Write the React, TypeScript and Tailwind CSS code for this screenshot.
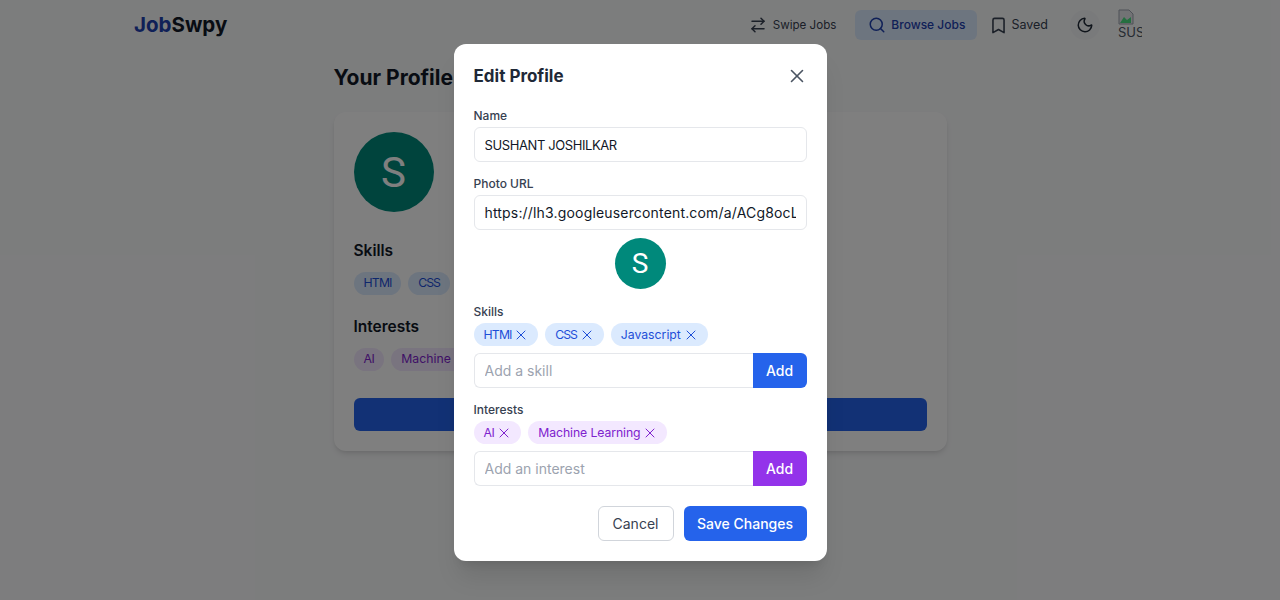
import { ArrowRightLeft, Bookmark, Moon, Search, X } from "lucide-react";

const font = { fontFamily: "Inter, 'Noto Sans', sans-serif" };

function Chip({ label, kind, tracking = "" }: { label: string; kind: "skill" | "interest"; tracking?: string }) {
  return (
    <span
      className={
        kind === "skill"
          ? "flex h-[23px] items-center gap-0.5 rounded-full bg-[#dbeafe] pl-2.5 pr-[9px] text-[12.25px] text-[#1d4ed8]"
          : "flex h-[23px] items-center gap-0.5 rounded-full bg-[#f3e8ff] pl-2.5 pr-[9px] text-[12.25px] text-[#7e22ce]"
      }
    >
      <span className={`pt-px ${tracking}`}>{label}</span>
      <X className="h-4 w-4" strokeWidth={1.5} />
    </span>
  );
}

function Field({ label, value, text }: { label: string; value: string; text: string }) {
  return (
    <div className="mb-[13px]">
      <div className="mb-0.5 text-xs font-medium leading-[18px] text-[#374151]">{label}</div>
      <input
        readOnly
        value={value}
        className={`block h-[35px] w-full rounded-md border border-[#e5e7eb] px-2.5 text-[#111827] ${text}`}
      />
    </div>
  );
}

function AddRow({ placeholder, color }: { placeholder: string; color: string }) {
  return (
    <div className="flex h-[35px]">
      <input
        readOnly
        placeholder={placeholder}
        className="min-w-0 flex-1 rounded-l-md border border-r-0 border-[#e5e7eb] px-2.5 text-sm placeholder:text-[#9ca3af]"
      />
      <button className={`w-[54px] rounded-r-md text-sm font-medium text-white ${color}`}>Add</button>
    </div>
  );
}

function BgChip({ label, kind, tracking = "" }: { label: string; kind: "skill" | "interest"; tracking?: string }) {
  return (
    <span
      className={
        kind === "skill"
          ? `flex h-[23px] items-center rounded-full bg-[#dbeafe] px-2.5 text-[12.25px] text-[#1d4ed8] ${tracking}`
          : `flex h-[23px] items-center whitespace-nowrap rounded-full bg-[#f3e8ff] px-2.5 text-[12.25px] text-[#7e22ce] ${tracking}`
      }
    >
      {label}
    </span>
  );
}

export default function App() {
  return (
    <div className="relative h-[600px] overflow-hidden bg-[#f9fafb]" style={font}>
      {/* Header */}
      <header className="h-[50px]">
        <div className="mx-auto flex h-full w-[1024px] items-center justify-between pl-1.5 pr-2.5">
          <div className="text-[20.5px] font-bold text-[#111827]">
            <span className="text-[#1e40af]">Job</span>Swpy
          </div>
          <nav className="flex items-center text-xs text-[#374151]">
            <a className="mr-[7px] flex items-center gap-1.5 px-3 text-[11.6px]">
              <ArrowRightLeft className="h-[18px] w-[18px]" />
              <span className="pt-px">Swipe Jobs</span>
            </a>
            <a className="flex h-[30px] items-center gap-[5px] rounded-md bg-[#dbeafe] pl-[13px] pr-3 font-medium text-[#1e40af]">
              <Search className="h-[18px] w-[18px]" />
              Browse Jobs
            </a>
            <a className="flex items-center gap-[3px] px-3 text-[12.5px]">
              <Bookmark className="h-[19px] w-[19px]" />
              Saved
            </a>
            <button className="ml-2.5 flex h-[30px] w-[30px] items-center justify-center rounded-full bg-[#f3f4f6]">
              <Moon className="h-[18px] w-[18px] text-[#1f2937]" />
            </button>
            <div className="ml-[18px] h-[32px] w-6 overflow-hidden whitespace-nowrap text-[13px] leading-[15px] text-[#4b5563]">
              <svg width="16" height="16" viewBox="0 0 16 16" className="block">
                <path d="M1 1h10l4 4v10H1z" fill="#e5e7eb" stroke="#9ca3af" />
                <path d="M2 14l4-6 3 3 4-3v6z" fill="#4ade80" />
              </svg>
              SUSHANT
            </div>
          </nav>
        </div>
      </header>

      {/* Profile page behind the dialog */}
      <main className="mx-auto w-[613px] pt-[14px]">
        <h1 className="text-[21px] font-bold leading-[28px] text-[#111827]">Your Profile</h1>
        <section className="mt-5 h-[339px] rounded-xl bg-white p-5 shadow-md">
          <div className="flex h-20 w-20 items-center justify-center rounded-full bg-[#00897b] text-[42px] text-white [font-family:Roboto]">
            S
          </div>
          <h2 className="mt-[29px] text-[15.5px] font-semibold leading-[20px] text-[#111827]">Skills</h2>
          <div className="mt-[11px] flex gap-[7px]">
            <BgChip label="HTMl" kind="skill" tracking="tracking-[-0.8px]" />
            <BgChip label="CSS" kind="skill" tracking="tracking-[-1.1px]" />
          </div>
          <h2 className="mt-[22px] text-[15.5px] font-semibold leading-[20px] text-[#111827]">Interests</h2>
          <div className="mt-[11px] flex gap-[7px]">
            <BgChip label="AI" kind="interest" tracking="tracking-[-0.5px]" />
            <BgChip label="Machine Learning" kind="interest" />
          </div>
          <div className="mt-[27px] h-[33px] rounded-md bg-[#2563eb]" />
        </section>
      </main>

      {/* Dialog */}
      <div className="absolute inset-0 flex justify-center bg-black/50 pt-11">
        <div className="h-[517px] w-[373px] rounded-xl bg-white px-5 pt-5 shadow-xl">
          <div className="mb-[17px] flex h-[26px] items-center justify-between">
            <h2 className="text-[17px] font-bold text-[#1f2937]">Edit Profile</h2>
            <X className="-mr-px -mt-0.5 h-[22px] w-[22px] text-[#4b5563]" strokeWidth={1.75} />
          </div>
          <Field label="Name" value="SUSHANT JOSHILKAR" text="text-[13px] tracking-[-0.4px]" />
          <Field
            label="Photo URL"
            value="https://lh3.googleusercontent.com/a/ACg8ocLq7xv2"
            text="text-sm tracking-[0.17px]"
          />
          <div className="-mt-[5px] mb-[15px] flex justify-center">
            <div className="flex h-[51px] w-[51px] items-center justify-center rounded-full bg-[#00897b] text-[28px] text-white [font-family:Roboto]">
              S
            </div>
          </div>
          <div className="text-xs font-medium leading-[16px] text-[#374151]">Skills</div>
          <div className="mb-[7px] mt-[3px] flex gap-[7px]">
            <Chip label="HTMl" kind="skill" tracking="tracking-[-0.8px]" />
            <Chip label="CSS" kind="skill" tracking="tracking-[-1.1px]" />
            <Chip label="Javascript" kind="skill" />
          </div>
          <AddRow placeholder="Add a skill" color="bg-[#2563eb]" />
          <div className="mt-[14px] text-xs font-medium leading-[16px] text-[#374151]">Interests</div>
          <div className="mb-[7px] mt-[3px] flex gap-[7px]">
            <Chip label="AI" kind="interest" tracking="tracking-[-0.5px]" />
            <Chip label="Machine Learning" kind="interest" tracking="tracking-[-0.1px]" />
          </div>
          <AddRow placeholder="Add an interest" color="bg-[#9333ea]" />
          <div className="mt-5 flex justify-end gap-2.5">
            <button className="h-[35px] w-[76px] rounded-md border border-[#d1d5db] text-sm text-[#374151]">
              Cancel
            </button>
            <button className="h-[35px] w-[123px] rounded-md bg-[#2563eb] text-sm font-medium text-white">
              Save Changes
            </button>
          </div>
        </div>
      </div>
    </div>
  );
}
